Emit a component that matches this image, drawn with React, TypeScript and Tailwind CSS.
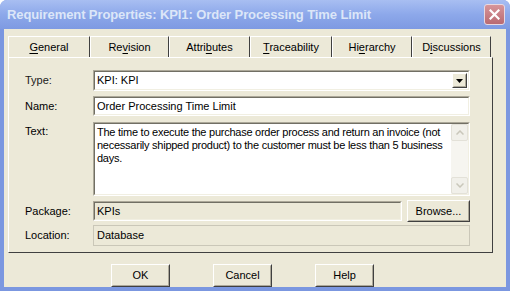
import React from 'react';

const font = { fontFamily: '"Liberation Sans", Arial, sans-serif' };

// Onglets de la boîte de dialogue
const tabs = [
  { pre: '', key: 'G', post: 'eneral', w: 82 },
  { pre: 'Re', key: 'v', post: 'ision', w: 79 },
  { pre: 'Attri', key: 'b', post: 'utes', w: 81 },
  { pre: '', key: 'T', post: 'raceability', w: 82 },
  { pre: 'Hi', key: 'e', post: 'rarchy', w: 80 },
  { pre: 'D', key: 'i', post: 'scussions', w: 79 },
];

function Raised({ children, className = '' }: { children: React.ReactNode; className?: string }) {
  return (
    <div className={`border border-t-white border-l-white border-r-[#404040] border-b-[#404040] bg-[#ECE9D8] ${className}`}>
      <div className="w-full h-full border border-t-[#ECE9D8] border-l-[#ECE9D8] border-r-[#ACA899] border-b-[#ACA899] flex items-center justify-center">
        {children}
      </div>
    </div>
  );
}

function Sunken({ children, className = '' }: { children: React.ReactNode; className?: string }) {
  return (
    <div className={`border border-t-[#ACA899] border-l-[#ACA899] border-r-white border-b-white ${className}`}>
      <div className="w-full h-full border border-t-[#716F64] border-l-[#716F64] border-r-[#F1EFE2] border-b-[#F1EFE2] flex">
        {children}
      </div>
    </div>
  );
}

export default function App() {
  return (
    <div className="w-[510px] h-[291px] bg-[#7B97E0] rounded-t-[7px] flex flex-col text-[11px] text-black" style={font}>
      {/* Barre de titre (fenêtre inactive) */}
      <div className="h-[30px] flex items-center justify-between pl-[7px] pr-[5px] rounded-t-[7px] bg-gradient-to-b from-[#A8BEF2] via-[#8DA8EA] to-[#7E9AE2]">
        <span className="text-[13px] font-bold text-[#DCE6F8] tracking-[-0.1px]">
          Requirement Properties: KPI1: Order Processing Time Limit
        </span>
        <div className="w-[21px] h-[21px] rounded-[3px] border border-[#E8D8E0] bg-gradient-to-b from-[#D7959A] to-[#B96A72] flex items-center justify-center">
          <svg width="11" height="11" viewBox="0 0 11 11">
            <path d="M1.5 1.5 L9.5 9.5 M9.5 1.5 L1.5 9.5" stroke="white" strokeWidth="2.2" strokeLinecap="square" />
          </svg>
        </div>
      </div>

      <div className="flex-1 mx-[4px] mb-[4px] bg-[#ECE9D8] pl-[4px] pt-[7px] flex flex-col">
        {/* Onglets */}
        <div className="flex h-[21px]">
          {tabs.map((t, i) => (
            <div
              key={i}
              className={`h-full border-t border-l border-r border-t-white border-l-white border-r-[#404040] flex items-center justify-center ${i === 0 ? 'bg-[#ECE9D8]' : ''}`}
              style={{ width: t.w }}
            >
              <span>
                {t.pre}
                <span className="underline underline-offset-[2px]">{t.key}</span>
                {t.post}
              </span>
            </div>
          ))}
        </div>

        {/* Panneau */}
        <div className="w-[485px] h-[196px] border border-t-white border-l-white border-r-[#404040] border-b-[#404040] flex flex-col pl-[16px] pr-[22px] pt-[12px]">
          <div className="flex items-center h-[21px]">
            <div className="w-[68px] text-[#1a1a1a]">Type:</div>
            <Sunken className="flex-1 h-[21px] bg-white">
              <div className="flex-1 pl-[2px] flex items-center">KPI: KPI</div>
              <div className="w-[17px] h-full p-[1px]">
                <Raised className="w-full h-full">
                  <svg width="7" height="4" viewBox="0 0 7 4"><path d="M0 0 H7 L3.5 4 Z" fill="black" /></svg>
                </Raised>
              </div>
            </Sunken>
          </div>

          <div className="flex items-center h-[20px] mt-[5px]">
            <div className="w-[68px]">Name:</div>
            <Sunken className="flex-1 h-[20px] bg-white">
              <div className="pl-[2px] flex items-center">Order Processing Time Limit</div>
            </Sunken>
          </div>

          <div className="flex items-start h-[74px] mt-[6px]">
            <div className="w-[68px] pt-[1px]">Text:</div>
            <Sunken className="flex-1 h-[74px] bg-white">
              <div className="flex-1 pl-[2px] pt-[2px] leading-[13px] pr-[2px] tracking-[-0.25px]">
                The time to execute the purchase order process and return an invoice (not necessarily shipped product) to the customer must be less than 5 business days.
              </div>
              <div className="w-[17px] h-full bg-[#F6F5F0] flex flex-col justify-between">
                <div className="h-[17px] rounded-[2px] border border-[#E3E1D8] bg-[#F1F0EA] flex items-center justify-center">
                  <svg width="8" height="5" viewBox="0 0 8 5"><path d="M0.5 4.5 L4 1 L7.5 4.5" stroke="#C9C7BA" strokeWidth="1.5" fill="none" /></svg>
                </div>
                <div className="h-[17px] rounded-[2px] border border-[#E3E1D8] bg-[#F1F0EA] flex items-center justify-center">
                  <svg width="8" height="5" viewBox="0 0 8 5"><path d="M0.5 0.5 L4 4 L7.5 0.5" stroke="#C9C7BA" strokeWidth="1.5" fill="none" /></svg>
                </div>
              </div>
            </Sunken>
          </div>

          <div className="flex items-center h-[22px] mt-[4px]">
            <div className="w-[68px]">Package:</div>
            <Sunken className="flex-1 h-[20px] bg-[#ECE9D8]">
              <div className="pl-[2px] flex items-center">KPIs</div>
            </Sunken>
            <Raised className="w-[63px] h-[22px] ml-[5px]">Browse...</Raised>
          </div>

          <div className="flex items-center h-[21px] mt-[3px]">
            <div className="w-[68px]">Location:</div>
            <div className="flex-1 h-[21px] border border-[#CAC7B8] bg-[#ECE9D8] flex items-center pl-[3px]">
              Database
            </div>
          </div>
        </div>

        {/* Boutons */}
        <div className="flex gap-[43px] pl-[103px] mt-[11px]">
          <Raised className="w-[59px] h-[23px]">OK</Raised>
          <Raised className="w-[59px] h-[23px]">Cancel</Raised>
          <Raised className="w-[59px] h-[23px]">Help</Raised>
        </div>
      </div>
    </div>
  );
}
